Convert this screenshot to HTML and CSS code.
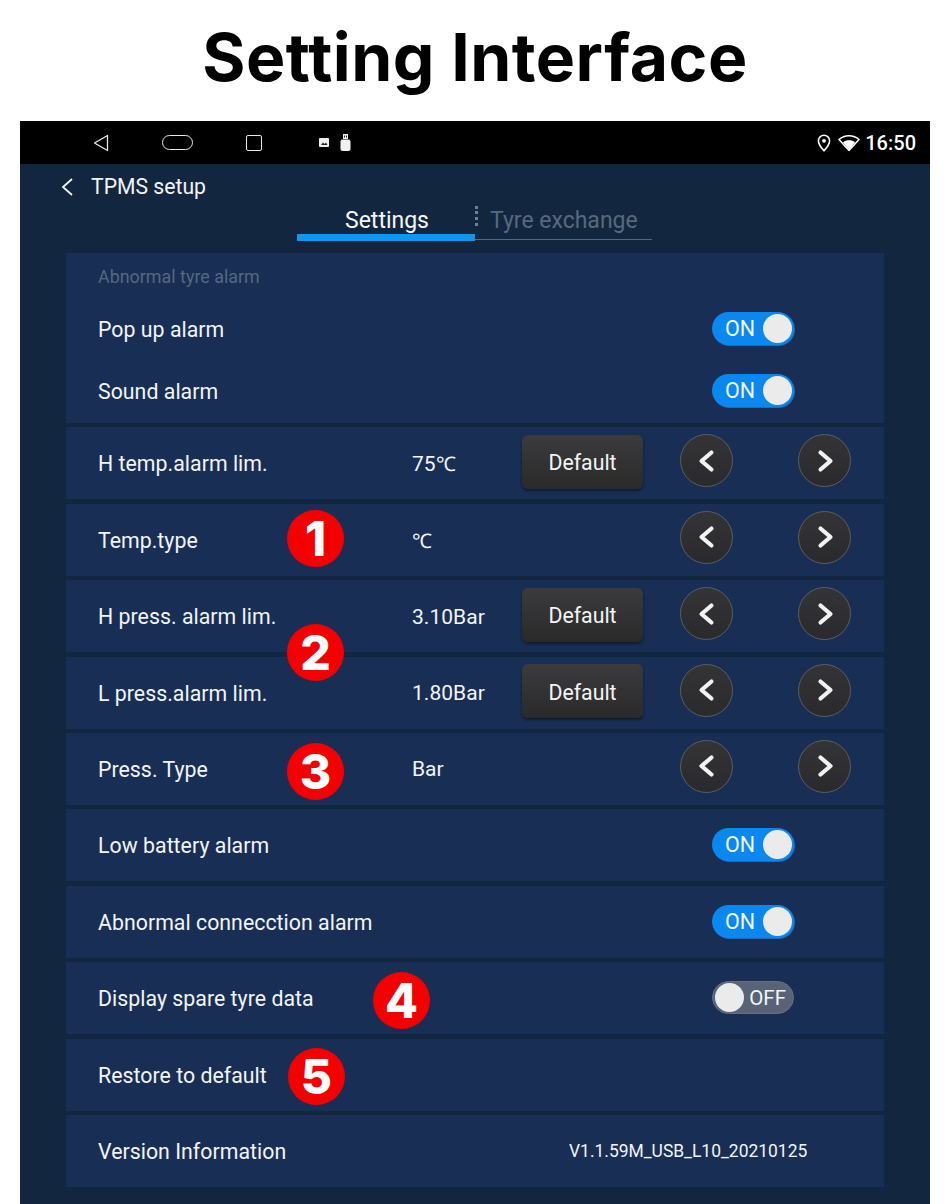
FILE: index.html
```html
<!DOCTYPE html>
<html lang="en">
<head>
<meta charset="utf-8">
<title>Setting Interface</title>
<link rel="stylesheet" href="styles.css">
</head>
<body>
<h1 class="title">Setting Interface</h1>
<main class="screen">
  <div class="statusbar">
    <div class="nav">
      <svg class="nav-back" width="16" height="18" viewBox="0 0 16 18"><path d="M14.500 1.500 1.500 9l13 7.500z" fill="none" stroke="#e8e8e8" stroke-width="1.300" stroke-linejoin="round"/></svg>
      <span class="nav-home"></span>
      <span class="nav-recent"></span>
      <svg class="note-img" width="10" height="9" viewBox="0 0 10 9"><rect width="10" height="9" rx="1" fill="#eee"/><path d="M2 7l2-2.500 1.500 1.500L7 4.500 8.500 7z" fill="#222"/></svg>
      <svg class="note-usb" width="11" height="17" viewBox="0 0 11 17"><path d="M3 0h5v5H3z" fill="#eee"/><path d="M4 1.500h1v2H4zM6 1.500h1v2H6z" fill="#222"/><path d="M1.500 5.500h8l1 2V15a2 2 0 0 1-2 2h-6a2 2 0 0 1-2-2V7.500z" fill="#f2f2f2"/></svg>
    </div>
    <div class="status">
      <svg width="14" height="18" viewBox="0 0 14 18"><path d="M7 1.200a5.600 5.600 0 0 0-5.600 5.600C1.400 10.800 7 16.800 7 16.800s5.600-6 5.600-10A5.600 5.600 0 0 0 7 1.200z" fill="none" stroke="#fff" stroke-width="1.600"/><circle cx="7" cy="6.800" r="1.900" fill="#fff"/></svg>
      <svg width="22" height="17" viewBox="0 0 22 17"><path d="M1 5.500C6.500.5 15.500.5 21 5.500L11 16.500z" fill="none" stroke="#fff" stroke-width="1.500" stroke-linejoin="round"/><path d="M5 8.300c3.600-2.600 8.400-2.600 12 0l-6 8z" fill="#fff"/></svg>
      <span class="clock">16:50</span>
    </div>
  </div>

  <div class="app">
    <div class="app-head">
      <svg width="14" height="20" viewBox="0 0 14 20"><path d="M12 2 3 10l9 8" fill="none" stroke="#f0f2f5" stroke-width="1.800"/></svg>
      <span>TPMS setup</span>
    </div>

    <div class="tabs">
      <div class="tab tab-active">Settings</div>
      <div class="tab-sep"></div>
      <div class="tab tab-idle">Tyre exchange</div>
    </div>

    <div class="list">
      <section class="group">
        <div class="group-title">Abnormal tyre alarm</div>
        <div class="group-row"><span class="label">Pop up alarm</span><span class="toggle on"><b>ON</b><i></i></span></div>
        <div class="group-row"><span class="label">Sound alarm</span><span class="toggle on"><b>ON</b><i></i></span></div>
      </section>

      <div class="row">
        <span class="label">H temp.alarm lim.</span><span class="value">75<span class="unit">℃</span></span>
        <button class="default">Default</button>
        <div class="arrows">
          <span class="arrow"><svg width="20" height="24" viewBox="0 0 20 24"><path d="M14.500 3.500 4.500 12l10 8.500" /></svg></span>
          <span class="arrow"><svg width="20" height="24" viewBox="0 0 20 24"><path d="M5.500 3.500l10 8.500-10 8.500" /></svg></span>
        </div>
      </div>
      <div class="row">
        <span class="label">Temp.type</span><span class="value"><span class="unit">℃</span></span>
        <div class="arrows">
          <span class="arrow"><svg width="20" height="24" viewBox="0 0 20 24"><path d="M14.500 3.500 4.500 12l10 8.500" /></svg></span>
          <span class="arrow"><svg width="20" height="24" viewBox="0 0 20 24"><path d="M5.500 3.500l10 8.500-10 8.500" /></svg></span>
        </div>
      </div>
      <div class="row">
        <span class="label">H press. alarm lim.</span><span class="value">3.10Bar</span>
        <button class="default">Default</button>
        <div class="arrows">
          <span class="arrow"><svg width="20" height="24" viewBox="0 0 20 24"><path d="M14.500 3.500 4.500 12l10 8.500" /></svg></span>
          <span class="arrow"><svg width="20" height="24" viewBox="0 0 20 24"><path d="M5.500 3.500l10 8.500-10 8.500" /></svg></span>
        </div>
      </div>
      <div class="row">
        <span class="label">L press.alarm lim.</span><span class="value">1.80Bar</span>
        <button class="default">Default</button>
        <div class="arrows">
          <span class="arrow"><svg width="20" height="24" viewBox="0 0 20 24"><path d="M14.500 3.500 4.500 12l10 8.500" /></svg></span>
          <span class="arrow"><svg width="20" height="24" viewBox="0 0 20 24"><path d="M5.500 3.500l10 8.500-10 8.500" /></svg></span>
        </div>
      </div>
      <div class="row">
        <span class="label">Press. Type</span><span class="value">Bar</span>
        <div class="arrows">
          <span class="arrow"><svg width="20" height="24" viewBox="0 0 20 24"><path d="M14.500 3.500 4.500 12l10 8.500" /></svg></span>
          <span class="arrow"><svg width="20" height="24" viewBox="0 0 20 24"><path d="M5.500 3.500l10 8.500-10 8.500" /></svg></span>
        </div>
      </div>
      <div class="row">
        <span class="label">Low battery alarm</span>
        <span class="toggle on"><b>ON</b><i></i></span>
      </div>
      <div class="row">
        <span class="label">Abnormal connecction alarm</span>
        <span class="toggle on"><b>ON</b><i></i></span>
      </div>
      <div class="row">
        <span class="label">Display spare tyre data</span>
        <span class="toggle off"><i></i><b>OFF</b></span>
      </div>
      <div class="row"><span class="label">Restore to default</span></div>
      <div class="row">
        <span class="label">Version Information</span>
        <span class="version">V1.1.59M_USB_L10_20210125</span>
      </div>

      <span class="badge badge-1">1</span>
      <span class="badge badge-2">2</span>
      <span class="badge badge-3">3</span>
      <span class="badge badge-4">4</span>
      <span class="badge badge-5">5</span>
    </div>
  </div>
</main>
</body>
</html>
```
FILE: styles.css
```css
* { box-sizing: border-box; }
html, body { margin: 0; padding: 0; background: #fff; }
body { width: 950px; height: 1204px; overflow: hidden; font-family: Roboto, "Liberation Sans", sans-serif; }

.title {
  margin: 0; height: 121px; padding-top: 15px;
  text-align: center; color: #000;
  font: 700 66px/84px Inter, "Liberation Sans", sans-serif;
  letter-spacing: .5px;
}

.screen { margin: 0 20px; height: 1083px; display: flex; flex-direction: column; }

.statusbar { height: 43px; background: #000; display: flex; align-items: center; justify-content: space-between; padding: 0 14px 0 73px; flex: none; }
.nav { display: flex; align-items: center; }
.nav-back { margin-right: 53px; }
.nav-home { width: 31px; height: 15px; border: 1.5px solid #e8e8e8; border-radius: 8px; margin-right: 53px; }
.nav-recent { width: 16px; height: 16px; border: 1.5px solid #e8e8e8; border-radius: 2px; margin-right: 57px; }
.note-img { margin-right: 11px; }
.status { display: flex; align-items: center; gap: 7px; }
.clock { color: #fff; font-size: 20px; font-weight: 500; margin-left: -2px; }

.app { flex: 1; background: #12263f; padding: 0 46px; color: #f2f4f7; }
.app-head { height: 45px; display: flex; align-items: center; font-size: 21.200px; margin-left: -6px; gap: 17px; }

.tabs { display: flex; margin-left: 231px; width: 355px; height: 31px; position: relative; border-bottom: 1px solid #4d6a85; }
.tab { font-size: 23px; line-height: 24px; text-align: center; }
.tab-active { width: 178px; height: 33px; padding: 1px 0 0 2px; border-bottom: 7px solid #0f96ee; margin-bottom: -4px; color: #f4f6f8; margin-top: -1px; }
.tab-sep { width: 3px; height: 20px; margin-top: -3px; border-left: 3px dotted #6d7f90; }
.tab-idle { color: #57697c; padding-left: 12px; }

.list { position: relative; margin-top: 13px; display: flex; flex-direction: column; gap: 4.400px; }
.group { background: #192e55; height: 170px; padding: 13px 90px 0 32px; }
.group-title { font-size: 17.900px; line-height: 22px; color: #56687f; margin-bottom: 10px; }
.group-row { height: 62px; display: flex; align-items: center; justify-content: space-between; font-size: 21.300px; letter-spacing: .03px; }

.row { background: #192e55; height: 72px; display: flex; align-items: center; padding: 0 33px 0 32px; font-size: 21.300px; letter-spacing: .03px; }
.label { padding-top: 1px; }
.row .label { width: 314px; flex: none; }
.value { width: 110px; flex: none; padding-top: 1px; font-size: 21px; }
.unit { font-size: 20px; }

.default {
  width: 121px; height: 54px; margin-top: -3px; padding-top: 3px; flex: none;
  background: linear-gradient(#3b3b3d, #2a2a2b);
  border: 0; border-radius: 6px; color: #f4f4f4; font: 21.300px Roboto, sans-serif;
  box-shadow: 0 2px 3px rgba(0, 0, 0, .45);
}
.arrows { margin-left: auto; display: flex; gap: 65px; margin-top: -5px; }
.arrow { width: 53px; height: 53px; border-radius: 50%; background: linear-gradient(#343436, #2a2a2c); border: 1px solid #595e63; display: flex; align-items: center; justify-content: center; }
.arrow svg { fill: none; stroke: #f2f2f2; stroke-width: 4.200; stroke-linecap: round; stroke-linejoin: round; }

.toggle { width: 82px; height: 33px; border-radius: 17px; display: flex; align-items: center; font-size: 21.500px; color: #f2f6fa; margin-left: auto; margin-top: -1px; flex: none; }
.row .toggle { margin-right: 57px; }
.toggle b { font-weight: 400; }
.toggle i { width: 29px; height: 29px; border-radius: 50%; background: #ebebec; flex: none; }
.toggle.on { background: #0a88f0; padding: 0 2px 0 13px; justify-content: space-between; box-shadow: 1px 1px 0 #1d6cb4; }
.toggle.off { background: #596377; padding: 0 7px 0 2px; justify-content: space-between; border: 1px solid #667085; font-size: 20.500px; }

.version { margin-left: 157px; font-size: 17.450px; padding-top: 1px; letter-spacing: 0; }

.badge {
  position: absolute; width: 57px; height: 57px; border-radius: 50%;
  background: #f40000; color: #fff; text-align: center;
  font: 800 48px/57px Inter, "Open Sans", sans-serif;
}
.badge-1 { left: 221px; top: 257px; }
.badge-2 { left: 221px; top: 371px; }
.badge-3 { left: 221px; top: 490px; }
.badge-4 { left: 307px; top: 719px; }
.badge-5 { left: 222px; top: 795px; }
```
